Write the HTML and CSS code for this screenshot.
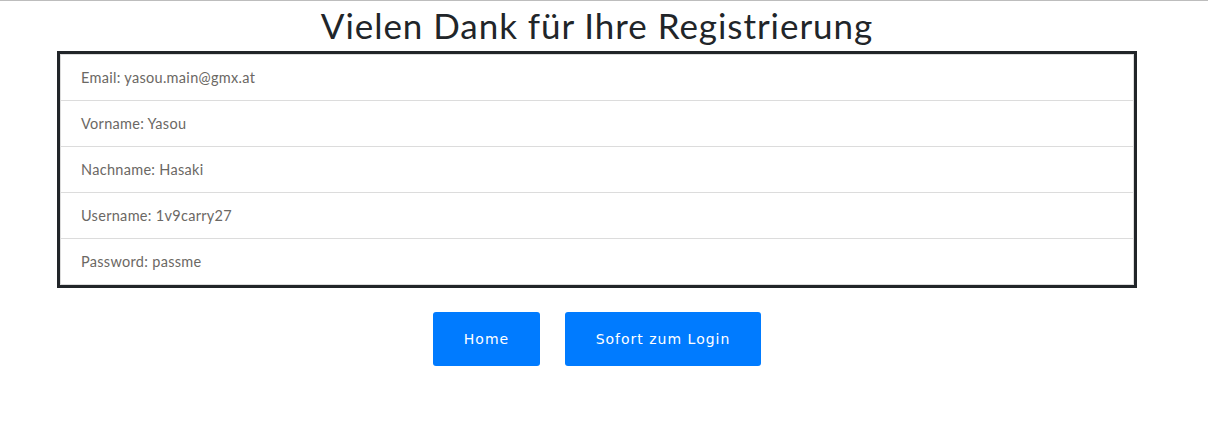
FILE: index.html
```html
<!DOCTYPE html>
<html lang="de">
<head>
<meta charset="utf-8">
<title>Registrierung</title>
<link rel="stylesheet" href="styles.css">
</head>
<body>
<div class="page">
  <h1 class="title">Vielen Dank für Ihre Registrierung</h1>
  <div class="box">
    <ul class="list">
      <li class="item">Email: yasou.main@gmx.at</li>
      <li class="item">Vorname: Yasou</li>
      <li class="item">Nachname: Hasaki</li>
      <li class="item">Username: 1v9carry27</li>
      <li class="item">Password: passme</li>
    </ul>
  </div>
  <div class="actions">
    <a class="btn btn-home" href="#">Home</a>
    <a class="btn btn-login" href="#">Sofort zum Login</a>
  </div>
</div>
</body>
</html>
```

FILE: styles.css
```css
html, body {
  margin: 0;
  padding: 0;
  background: #fff;
}
body {
  border-top: 1px solid #bdbdbd;
  font-family: Lato, "Open Sans", sans-serif;
}
.page {
  width: 1194px;
  display: flex;
  flex-direction: column;
  align-items: center;
}
.title {
  margin: 0;
  padding-top: 3px;
  font-family: Lato, sans-serif;
  font-weight: 400;
  font-size: 35px;
  letter-spacing: 0.95px;
  line-height: 42px;
  height: 47px;
  color: #212529;
}
.box {
  width: 1074px;
  border: 3px solid #212529;
}
.list {
  list-style: none;
  margin: 0;
  padding: 0;
  border: 1px solid #dcdcdc;
}
.item {
  padding: 12px 20px;
  font-size: 14.5px;
  letter-spacing: 0.3px;
  line-height: 21px;
  color: #6b6864;
  border-top: 1px solid #dcdcdc;
}
.item:first-child {
  border-top: none;
}
.actions {
  margin-top: 24px;
  display: flex;
  gap: 25px;
}
.btn {
  display: block;
  height: 54px;
  line-height: 54px;
  background: #007bff;
  color: #fff;
  border-radius: 3px;
  text-decoration: none;
  font-family: "DejaVu Sans", Verdana, sans-serif;
  font-size: 14px;
  letter-spacing: 1px;
  text-align: center;
}
.btn-home {
  width: 107px;
}
.btn-login {
  width: 196px;
}
```
